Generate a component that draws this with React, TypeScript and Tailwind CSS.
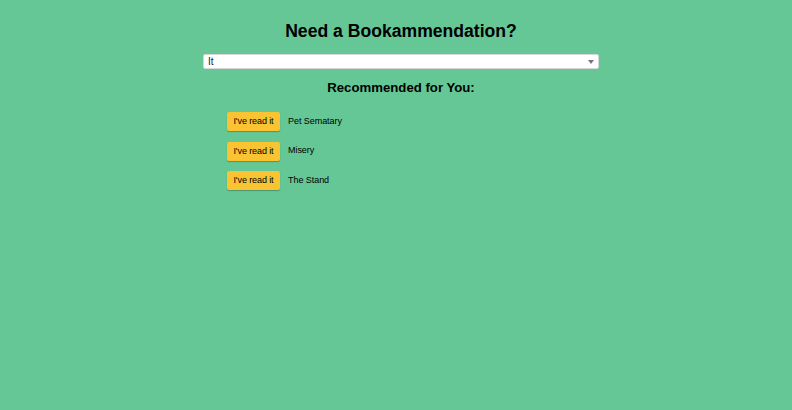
import React from "react";

export default function App() {
  const books = ["Pet Sematary", "Misery", "The Stand"];
  return (
    <div className="min-h-[410px] w-full bg-[#64c795] pl-[10px] font-['Liberation_Sans',Arial,sans-serif] text-black">
      <div className="mx-auto flex w-[396px] flex-col pt-[20px]">
        <h1 className="text-center text-[17.6px] font-bold leading-[22px]">Need a Bookammendation?</h1>
        <div className="mt-[12px] flex h-[15px] items-center justify-between rounded-[2px] border border-[#d8d8d8] bg-white pl-[4px] pr-[4px]">
          <span className="text-[10px] leading-none text-[#222]">It</span>
          <svg width="6" height="4" viewBox="0 0 6 4"><path d="M0 0h6L3 4z" fill="#777" /></svg>
        </div>
        <h2 className="mt-[11px] text-center text-[13.2px] font-bold leading-[16px]">Recommended for You:</h2>
        <div className="mt-[16px] flex flex-col gap-[10.5px] pl-[24px]">
          {books.map((b) => (
            <div key={b} className="flex items-center">
              <button className="h-[19px] w-[53px] rounded-[2px] bg-[#f9c332] text-[9px] leading-none tracking-[-0.1px] text-black shadow-[0_1px_1px_rgba(0,0,0,0.25)]">
                I've read it
              </button>
              <span className="ml-[8px] text-[9px] tracking-[-0.05px]">{b}</span>
            </div>
          ))}
        </div>
      </div>
    </div>
  );
}
